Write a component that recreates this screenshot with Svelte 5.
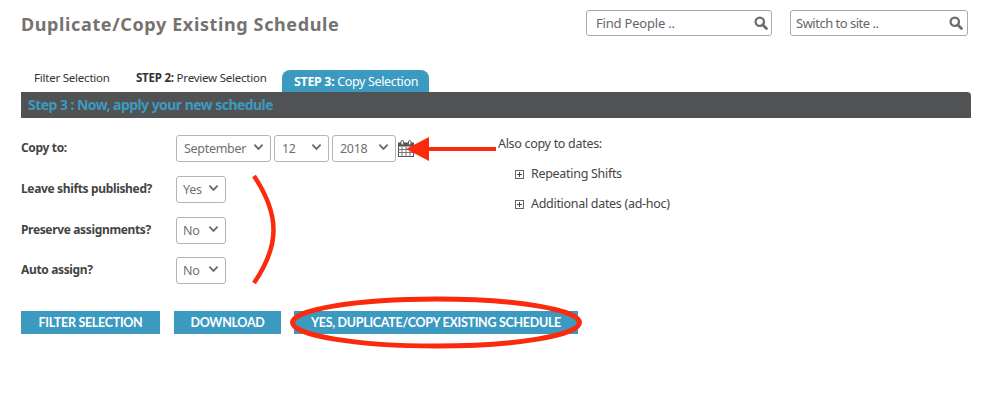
<script>
  const chevron = "M1.5 1.5L6 6l4.500-4.500";
</script>

<div class="page">
  <header class="top">
    <h1>Duplicate/Copy Existing Schedule</h1>
    <div class="searches">
      <div class="search people">
        <span>Find People ..</span>
        <svg viewBox="0 0 16 16" width="14" height="14"><circle cx="6.600" cy="6.600" r="4.800" fill="none" stroke="#6d6d6d" stroke-width="2.600"/><path d="M10 10l4.200 4.200" stroke="#6d6d6d" stroke-width="3.200" stroke-linecap="round"/></svg>
      </div>
      <div class="search site">
        <span>Switch to site ..</span>
        <svg viewBox="0 0 16 16" width="14" height="14"><circle cx="6.600" cy="6.600" r="4.800" fill="none" stroke="#6d6d6d" stroke-width="2.600"/><path d="M10 10l4.200 4.200" stroke="#6d6d6d" stroke-width="3.200" stroke-linecap="round"/></svg>
      </div>
    </div>
  </header>

  <nav class="tabs">
    <div class="tab first">Filter Selection</div>
    <div class="tab second"><b>STEP 2:</b> Preview Selection</div>
    <div class="tab active"><b>STEP 3:</b> Copy Selection</div>
  </nav>
  <div class="bar">Step 3 : Now, apply your new schedule</div>

  <section class="form">
    <div class="left">
      <div class="row date">
        <span class="label">Copy to:</span>
        <div class="sel month">September<svg class="chev" viewBox="0 0 12 8"><path d={chevron} fill="none" stroke="#6a6a6a" stroke-width="2"/></svg></div>
        <div class="sel day">12<svg class="chev" viewBox="0 0 12 8"><path d={chevron} fill="none" stroke="#6a6a6a" stroke-width="2"/></svg></div>
        <div class="sel year">2018<svg class="chev" viewBox="0 0 12 8"><path d={chevron} fill="none" stroke="#6a6a6a" stroke-width="2"/></svg></div>
        <svg class="cal" viewBox="0 0 16 17" width="16" height="17">
          <rect x="0.500" y="3" width="15" height="13.500" fill="none" stroke="#555"/>
          <rect x="0.500" y="3" width="15" height="3.500" fill="#555"/>
          <path d="M0.500 9.500h15M0.500 12.500h15M4 6.500v10M8 6.500v10M12 6.500v10" stroke="#777" stroke-width="1"/>
          <rect x="3" y="0.500" width="2.500" height="4.500" rx="1.200" fill="#fff" stroke="#555"/>
          <rect x="10.500" y="0.500" width="2.500" height="4.500" rx="1.200" fill="#fff" stroke="#555"/>
        </svg>
      </div>
      <div class="row opt">
        <span class="label">Leave shifts published?</span>
        <div class="sel small">Yes<svg class="chev" viewBox="0 0 12 8"><path d={chevron} fill="none" stroke="#6a6a6a" stroke-width="2"/></svg></div>
      </div>
      <div class="row opt">
        <span class="label">Preserve assignments?</span>
        <div class="sel small">No<svg class="chev" viewBox="0 0 12 8"><path d={chevron} fill="none" stroke="#6a6a6a" stroke-width="2"/></svg></div>
      </div>
      <div class="row opt">
        <span class="label">Auto assign?</span>
        <div class="sel small">No<svg class="chev" viewBox="0 0 12 8"><path d={chevron} fill="none" stroke="#6a6a6a" stroke-width="2"/></svg></div>
      </div>
    </div>
    <div class="right">
      <div class="also">Also copy to dates:</div>
      <div class="tree"><span class="plus"></span>Repeating Shifts</div>
      <div class="tree"><span class="plus"></span>Additional dates (ad-hoc)</div>
    </div>
  </section>

  <div class="buttons">
    <button class="b1">FILTER SELECTION</button>
    <button class="b2">DOWNLOAD</button>
    <button class="b3">YES, DUPLICATE/COPY EXISTING SCHEDULE</button>
  </div>

  <svg class="marks" width="985" height="400" viewBox="0 0 985 400">
    <path d="M496 149H425" stroke="#fb2a0c" stroke-width="4" fill="none"/>
    <path d="M406 149L429 137V161Z" fill="#fb2a0c"/>
    <path d="M254 176C280 215 280 245 254 283" stroke="#fb2a0c" stroke-width="4.500" fill="none"/>
    <ellipse cx="436" cy="322.500" rx="143.500" ry="23.500" stroke="#fb2a0c" stroke-width="5" fill="none"/>
  </svg>
</div>

<style>
  :global(body) { margin: 0; background: #fff; }
  .page {
    position: relative;
    width: 985px;
    height: 400px;
    overflow: hidden;
    font-family: "Noto Sans", "Open Sans", sans-serif;
    color: #444;
  }
  .top {
    display: flex;
    justify-content: space-between;
    padding: 10px 17px 0 21px;
    height: 70px;
    box-sizing: border-box;
  }
  h1 {
    margin: 2px 0 0;
    font-size: 18px;
    line-height: 24px;
    letter-spacing: 0.620px;
    font-weight: 700;
    color: #75726f;
  }
  .searches { display: flex; gap: 18px; }
  .search {
    display: flex;
    align-items: center;
    justify-content: space-between;
    height: 26px;
    box-sizing: border-box;
    border: 1px solid #aaa;
    border-radius: 3px;
    font-size: 13px;
    color: #666;
  }
  .people { width: 186px; padding: 0 3px 0 9px; letter-spacing: -0.200px; }
  .site { width: 178px; padding: 0 4px 0 5px; letter-spacing: -0.500px; }
  .tabs { display: flex; height: 22px; align-items: flex-end; }
  .tab { font-size: 11.500px; line-height: 16px; color: #333; letter-spacing: -0.220px; }
  .tab b { font-weight: 700; }
  .first { margin-left: 34px; width: 102px; padding-bottom: 6px; }
  .second { width: 146px; padding-bottom: 6px; }
  .active {
    width: 147px;
    height: 22px;
    box-sizing: border-box;
    background: #3c9ac0;
    color: #fff;
    border-radius: 8px 8px 0 0;
    padding: 4px 0 0 12px;
    font-size: 12.500px;
    letter-spacing: -0.350px;
  }
  .bar {
    margin-left: 21px;
    width: 950px;
    height: 26px;
    box-sizing: border-box;
    background: #515254;
    border-radius: 0 4px 0 0;
    color: #3c9ac0;
    font-size: 14px;
    line-height: 26px;
    font-weight: 700;
    letter-spacing: -0.550px;
    padding-left: 7px;
  }
  .form { display: flex; padding: 17px 0 0 21px; }
  .left { width: 477px; }
  .row { display: flex; align-items: center; }
  .date { gap: 3px; height: 27px; margin-bottom: 14px; }
  .opt { height: 27px; margin-bottom: 13.500px; }
  .label {
    width: 155px;
    flex: none;
    font-size: 12px;
    font-weight: 700;
    letter-spacing: -0.350px;
    color: #444;
    padding-bottom: 2px;
  }
  .date .label { margin-right: -3px; }
  .sel {
    position: relative;
    height: 27px;
    box-sizing: border-box;
    border: 1px solid #b5b5b5;
    border-radius: 3px;
    font-size: 12.500px;
    letter-spacing: -0.300px;
    line-height: 25px;
    padding-left: 7px;
    color: #707070;
  }
  .chev { position: absolute; right: 6px; top: 7px; width: 11px; height: 8px; }
  .month { width: 95px; }
  .day { width: 55px; }
  .year { width: 64px; }
  .small { width: 50px; padding-left: 6px; }
  .cal { flex: none; margin-left: -1px; }
  .right { margin-top: -1px; font-size: 12.500px; letter-spacing: -0.300px; color: #444; }
  .also { height: 25px; line-height: 20px; }
  .tree { display: flex; align-items: center; height: 30px; margin-left: 17px; line-height: 20px; }
  .plus {
    width: 9px;
    height: 9px;
    box-sizing: border-box;
    border: 1px solid #666;
    margin-right: 7px;
    background:
      linear-gradient(#444, #444) center / 5px 1px no-repeat,
      linear-gradient(#444, #444) center / 1px 5px no-repeat;
  }
  .buttons { display: flex; padding: 13px 0 0 21px; }
  button {
    height: 23px;
    border: 0;
    padding: 0;
    background: #3c9ac0;
    color: #fff;
    font-family: Lato, sans-serif;
    font-weight: 700;
    font-size: 12.500px;
    letter-spacing: -0.300px;
  }
  .b1 { width: 139px; margin-right: 14px; }
  .b2 { width: 107px; margin-right: 13px; }
  .b3 { width: 284px; }
  .marks { position: absolute; left: 0; top: 0; pointer-events: none; }
</style>
